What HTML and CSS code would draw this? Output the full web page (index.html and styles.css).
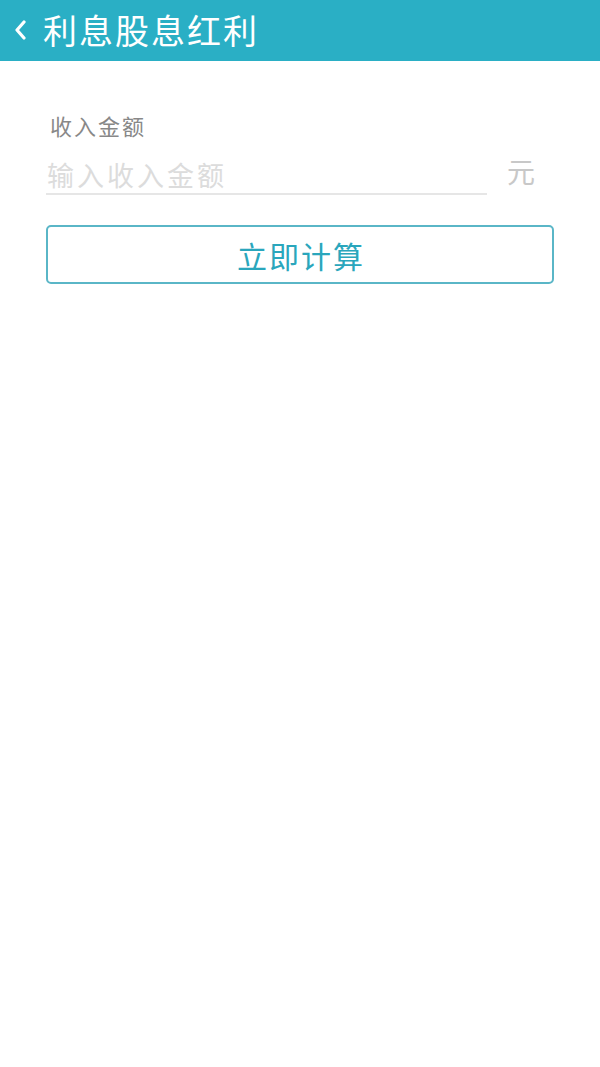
FILE: index.html
```html
<!DOCTYPE html>
<html lang="zh">
<head>
<meta charset="utf-8">
<title>利息股息红利</title>
<link rel="stylesheet" href="styles.css">
</head>
<body>
<header class="topbar">
  <svg class="back" width="16" height="20" viewBox="0 0 16 20"><path d="M12 2 L5 10 L12 18" fill="none" stroke="#fff" stroke-width="3.2" stroke-linecap="round" stroke-linejoin="round"/></svg>
  <h1 class="title">利息股息红利</h1>
</header>
<main class="content">
  <div class="label">收入金额</div>
  <div class="input-row">
    <div class="input">输入收入金额</div>
    <div class="unit">元</div>
  </div>
  <button class="calc">立即计算</button>
</main>
</body>
</html>
```
FILE: styles.css
```css
html, body {
  margin: 0;
  padding: 0;
  background: #ffffff;
  font-family: "Noto Sans CJK SC", "Noto Sans", sans-serif;
}
.topbar {
  height: 61px;
  background: #2aafc5;
  display: flex;
  align-items: center;
  padding-left: 12px;
  box-sizing: border-box;
}
.back {
  display: block;
  margin-top: -2px;
}
.title {
  margin: -2px 0 0 15px;
  color: #ffffff;
  font-size: 34px;
  font-weight: 400;
  letter-spacing: 2px;
  line-height: 1;
}
.content {
  padding: 0 46px;
}
.label {
  margin-top: 51px;
  padding-left: 4px;
  font-size: 22px;
  letter-spacing: 2px;
  color: #888888;
  line-height: 26px;
}
.input-row {
  display: flex;
  align-items: flex-end;
  margin-top: 17px;
}
.input {
  width: 441px;
  box-sizing: border-box;
  border-bottom: 2px solid #e6e6e6;
  font-size: 27px;
  letter-spacing: 3px;
  color: #dcdcdc;
  padding-left: 1px;
  line-height: 32px;
  padding-bottom: 2px;
}
.unit {
  margin-left: 20px;
  font-size: 28px;
  color: #c8c8c8;
  line-height: 32px;
  padding-bottom: 8px;
}
.calc {
  display: block;
  width: 508px;
  height: 59px;
  margin-top: 30px;
  background: #ffffff;
  border: 2px solid #5ab6c7;
  border-radius: 5px;
  color: #2aa6bc;
  font-family: "Noto Sans CJK SC", "Noto Sans", sans-serif;
  font-size: 30px;
  letter-spacing: 2px;
  padding: 0 0 0 2px;
  line-height: 1;
}
```
